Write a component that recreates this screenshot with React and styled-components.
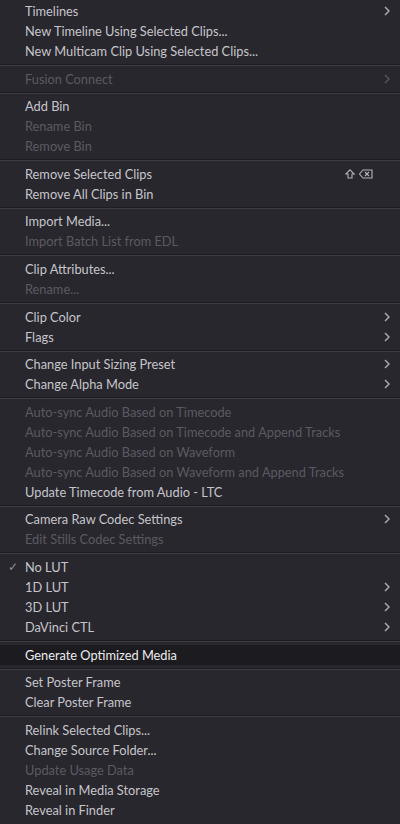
import React from 'react';
import styled, { createGlobalStyle } from 'styled-components';

const GlobalStyle = createGlobalStyle`
  html, body {
    margin: 0;
    padding: 0;
    background: #28272e;
  }
`;

// each group is a block of rows, separated by a rule
const groups = [
  [
    { label: 'Timelines', sub: true },
    { label: 'New Timeline Using Selected Clips...' },
    { label: 'New Multicam Clip Using Selected Clips...' },
  ],
  [{ label: 'Fusion Connect', sub: true, disabled: true }],
  [
    { label: 'Add Bin' },
    { label: 'Rename Bin', disabled: true },
    { label: 'Remove Bin', disabled: true },
  ],
  [
    { label: 'Remove Selected Clips', shortcut: true },
    { label: 'Remove All Clips in Bin' },
  ],
  [
    { label: 'Import Media...' },
    { label: 'Import Batch List from EDL', disabled: true },
  ],
  [
    { label: 'Clip Attributes...' },
    { label: 'Rename...', disabled: true },
  ],
  [
    { label: 'Clip Color', sub: true },
    { label: 'Flags', sub: true },
  ],
  [
    { label: 'Change Input Sizing Preset', sub: true },
    { label: 'Change Alpha Mode', sub: true },
  ],
  [
    { label: 'Auto-sync Audio Based on Timecode', disabled: true },
    { label: 'Auto-sync Audio Based on Timecode and Append Tracks', disabled: true },
    { label: 'Auto-sync Audio Based on Waveform', disabled: true },
    { label: 'Auto-sync Audio Based on Waveform and Append Tracks', disabled: true },
    { label: 'Update Timecode from Audio - LTC' },
  ],
  [
    { label: 'Camera Raw Codec Settings', sub: true },
    { label: 'Edit Stills Codec Settings', disabled: true },
  ],
  [
    { label: 'No LUT', checked: true },
    { label: '1D LUT', sub: true },
    { label: '3D LUT', sub: true },
    { label: 'DaVinci CTL', sub: true },
  ],
  [{ label: 'Generate Optimized Media', active: true }],
  [
    { label: 'Set Poster Frame' },
    { label: 'Clear Poster Frame' },
  ],
  [
    { label: 'Relink Selected Clips...' },
    { label: 'Change Source Folder...' },
    { label: 'Update Usage Data', disabled: true },
    { label: 'Reveal in Media Storage' },
    { label: 'Reveal in Finder' },
  ],
];

function Chevron({ dim }) {
  return (
    <svg width="6" height="10" viewBox="0 0 6 10">
      <path
        d="M1 1 L5 5 L1 9"
        fill="none"
        stroke={dim ? '#55545b' : '#a9a8ae'}
        strokeWidth="1.5"
      />
    </svg>
  );
}

function ShiftDelete() {
  return (
    <svg width="28" height="10" viewBox="0 0 28 10">
      <path
        d="M5 0.8 L9.2 5 L7 5 L7 9 L3 9 L3 5 L0.8 5 Z"
        fill="none"
        stroke="#b5b4ba"
        strokeWidth="1.1"
      />
      <path
        d="M14.5 5 L18 1 L27 1 L27 9 L18 9 Z"
        fill="none"
        stroke="#b5b4ba"
        strokeWidth="1.1"
      />
      <path d="M20 3 L24 7 M24 3 L20 7" stroke="#b5b4ba" strokeWidth="1.1" />
    </svg>
  );
}

function App() {
  return (
    <Menu>
      <GlobalStyle />
      {groups.map((group, gi) => (
        <React.Fragment key={gi}>
          {gi > 0 && <Separator />}
          {group.map((item) => (
            <Row key={item.label} $active={item.active}>
              <Check>{item.checked ? '✓' : ''}</Check>
              <Label $disabled={item.disabled} $active={item.active}>
                {item.label}
              </Label>
              {item.shortcut && (
                <Shortcut>
                  <ShiftDelete />
                </Shortcut>
              )}
              {item.sub && (
                <Arrow>
                  <Chevron dim={item.disabled} />
                </Arrow>
              )}
            </Row>
          ))}
        </React.Fragment>
      ))}
    </Menu>
  );
}

const Menu = styled.div`
  display: flex;
  flex-direction: column;
  width: 400px;
  height: 824px;
  padding-top: 1px;
  box-sizing: border-box;
  background: #28272e;
  font-family: Lato, 'Open Sans', sans-serif;
  font-size: 12.8px;
  overflow: hidden;
`;

const Row = styled.div`
  display: flex;
  align-items: center;
  height: 20px;
  flex-shrink: 0;
  background: ${(p) => (p.$active ? '#1c1b1f' : 'transparent')};
`;

const Check = styled.span`
  width: 25px;
  padding-left: 8px;
  box-sizing: border-box;
  color: #8e8d93;
  font-size: 12px;
`;

const Label = styled.span`
  flex: 1;
  white-space: nowrap;
  color: ${(p) =>
    p.$disabled ? '#5b5a61' : p.$active ? '#ececee' : '#c6c5ca'};
`;

const Shortcut = styled.span`
  display: flex;
  align-items: center;
  margin-right: 27px;
`;

const Arrow = styled.span`
  display: flex;
  align-items: center;
  margin-right: 10px;
`;

const Separator = styled.div`
  flex-shrink: 0;
  height: 7.6px;
  box-sizing: border-box;
  padding-top: 3px;
  &::before {
    content: '';
    display: block;
    height: 1px;
    background: #1d1c21;
  }
  &::after {
    content: '';
    display: block;
    height: 1px;
    background: #3e3d45;
  }
`;

export default App;
